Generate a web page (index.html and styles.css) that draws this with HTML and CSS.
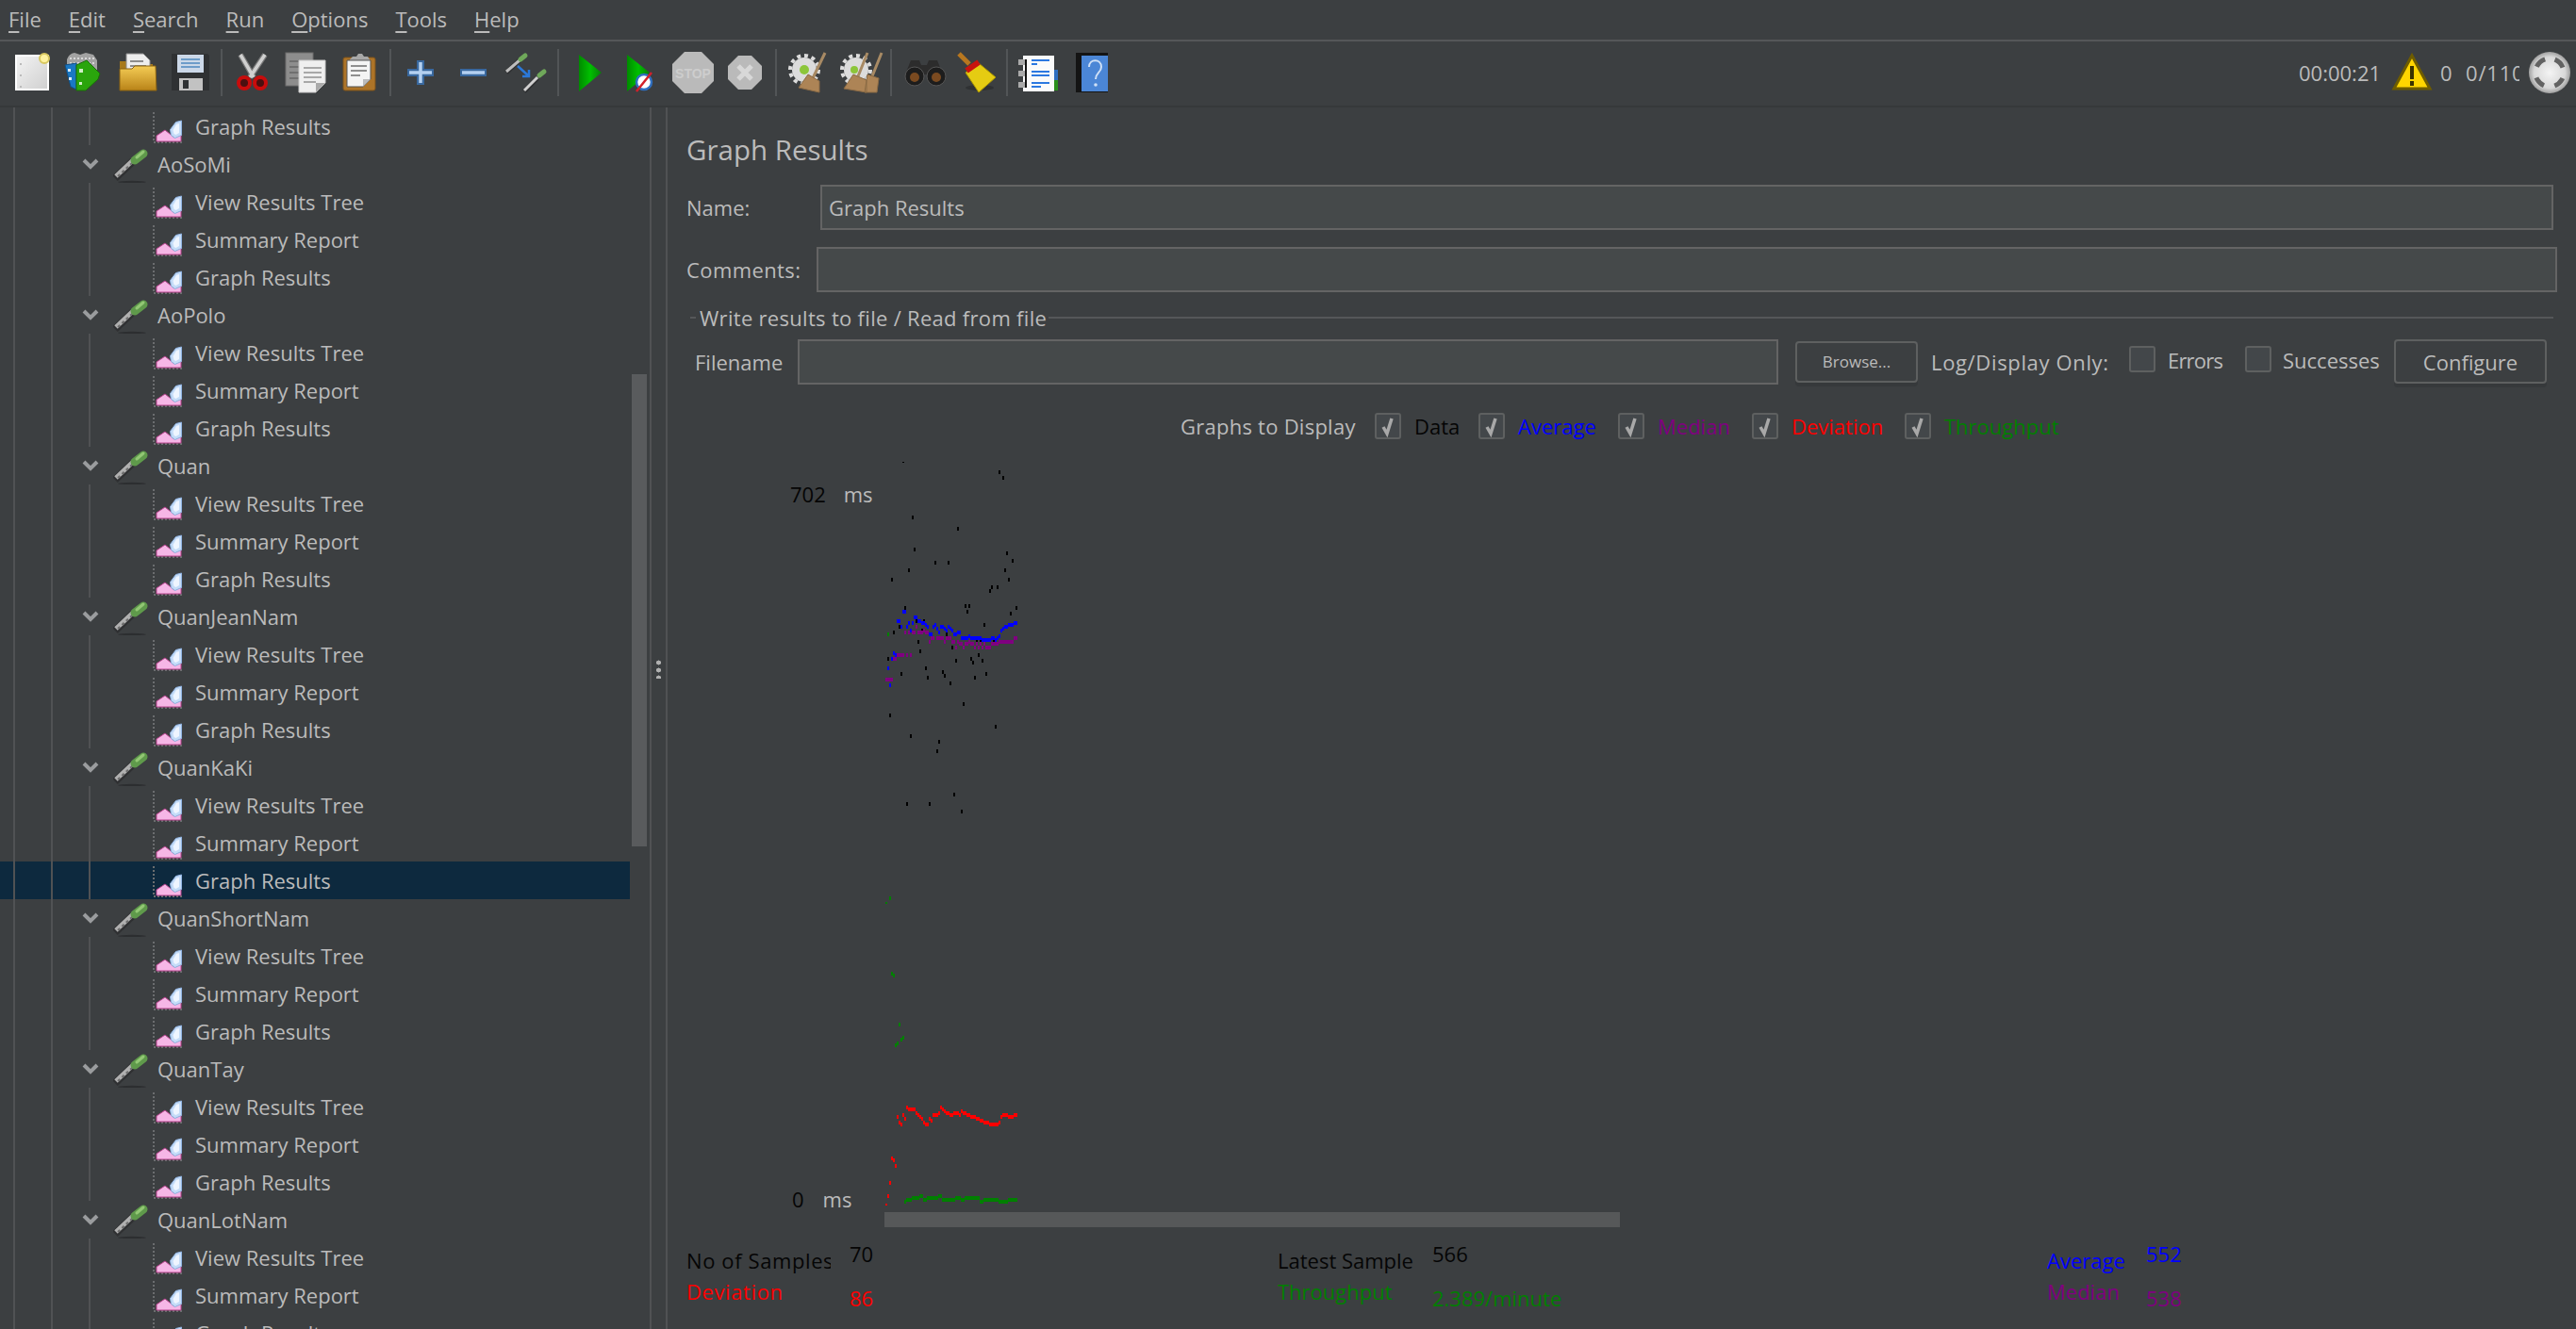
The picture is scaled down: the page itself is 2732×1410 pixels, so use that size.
FILE: index.html
```html
<!DOCTYPE html>
<html lang="en">
<head>
<meta charset="utf-8">
<title>Apache JMeter - Graph Results</title>
<link rel="stylesheet" href="styles.css">
</head>
<body>
<svg class="sprite" aria-hidden="true">
  <defs>
    <linearGradient id="g-paper" x1="0" y1="0" x2="1" y2="1"><stop offset="0" stop-color="#f4f4f4"/><stop offset="1" stop-color="#cfcfcf"/></linearGradient>
    <linearGradient id="g-folder" x1="0" y1="0" x2="0" y2="1"><stop offset="0" stop-color="#f4cc55"/><stop offset="1" stop-color="#b98318"/></linearGradient>
    <linearGradient id="g-play" x1="0" y1="0" x2="1" y2="0"><stop offset="0" stop-color="#008a00"/><stop offset=".5" stop-color="#00c000"/><stop offset="1" stop-color="#0a7a0a"/></linearGradient>
    <radialGradient id="g-ball"><stop offset="0" stop-color="#f4f4f4"/><stop offset=".75" stop-color="#d8d8d8"/><stop offset="1" stop-color="#a0a0a0"/></radialGradient>
    <symbol id="i-graph" viewBox="0 0 34 34">
      <path class="axis" d="M1 1v32M1 33h32"/>
      <path fill="#f6b6e6" stroke="#b8448e" stroke-width="1" d="M4 32v-6l9-6 5 4 5 4 7-3v7z"/>
      <path fill="#c4dcf8" stroke="#8fb2e0" stroke-width="1" d="M30.500 10l-6 1.500-6 8 1 6 4 3 7-3z"/>
      <path fill="#eef5ff" d="M28 13l-3 1-3.500 6 1 4 2 1 3.500-2z"/>
    </symbol>
    <symbol id="i-pipette" viewBox="0 0 38 38">
      <ellipse cx="20" cy="37" rx="15" ry="1.200" fill="#2c2e30"/>
      <path stroke="#2f3032" stroke-width="8" d="M2 33L21 15"/>
      <path stroke="#b0b0b0" stroke-width="5" d="M3 31L21 14"/>
      <path stroke="#6d6d6d" stroke-width="2" stroke-dasharray="3 3" d="M5 31L21 16"/>
      <path stroke="#5f9a4b" stroke-width="9" stroke-linecap="round" d="M23 14L32 7"/>
      <path stroke="#92c774" stroke-width="3" stroke-linecap="round" d="M25 11L32 5"/>
    </symbol>
    <symbol id="i-check" viewBox="0 0 24 24">
      <path fill="none" stroke="#a8a8a8" stroke-width="3.500" d="M7 13l4 7 5-16"/>
    </symbol>
  </defs>
</svg>

<div class="app">
  <nav class="menubar">
    <span><u>F</u>ile</span><span><u>E</u>dit</span><span><u>S</u>earch</span><span><u>R</u>un</span><span><u>O</u>ptions</span><span><u>T</u>ools</span><span><u>H</u>elp</span>
  </nav>

  <header class="toolbar">
    <div class="tb-group">
      <button class="tb-btn" aria-label="New"><svg viewBox="0 0 44 44"><rect x="5" y="4" width="34" height="36" fill="url(#g-paper)" stroke="#fff" stroke-width="2"/><circle cx="35" cy="7" r="5" fill="#fff3a0" stroke="#d8c860" stroke-width="2"/><path stroke="#bbb" stroke-width="2" stroke-dasharray="2 10" d="M10 12v26"/></svg></button>
      <button class="tb-btn" aria-label="Templates"><svg viewBox="0 0 44 44"><path fill="#a2a2a2" d="M3 8q2-6 8-7l6 2 6-2 8 2 4 6v12H3z"/><path stroke="#d8d8d8" stroke-width="2" stroke-dasharray="2 2" d="M6 7h26M6 12h26"/><path fill="#1a78c4" stroke="#0f4f86" d="M1 14l12-2v28l-6-3z"/><path fill="#d7e9f7" d="M4 18h3v3H4zM5 27h3v3H5z"/><path fill="#2aa50c" stroke="#1a6e08" d="M13 14l11-5 14 14-2 6-13 12H13z"/><path fill="#cfeec6" d="M16 18h4v4h-4zM16 32h3v3h-3z"/></svg></button>
      <button class="tb-btn" aria-label="Open"><svg viewBox="0 0 44 44"><path fill="#a87a1c" d="M3 10h14l3 3h18v10H3z"/><path fill="#ededed" stroke="#8c8c8c" d="M10 2h18l7 7v17H10z"/><path stroke="#8c8c8c" stroke-width="2" d="M14 10h14M14 15h17M14 20h17"/><path fill="url(#g-folder)" stroke="#8a6212" d="M3 18h13l3-3h22l1 26H3z"/></svg></button>
      <button class="tb-btn" aria-label="Save"><svg viewBox="0 0 44 44"><path fill="#2f3133" d="M2 2h38l2 2v37H2z"/><rect x="8" y="3" width="28" height="19" fill="#ccd8e8"/><path stroke="#6d9cc9" stroke-width="2" d="M12 8h20M12 12h20M12 16h20"/><rect x="10" y="28" width="25" height="13" fill="#c2c2c2"/><rect x="14" y="30" width="6" height="9" fill="#2f3133"/></svg></button>
    </div>
    <span class="tb-sep"></span>
    <div class="tb-group">
      <button class="tb-btn" aria-label="Cut"><svg viewBox="0 0 44 44"><path stroke="#7a7a7a" stroke-width="6" d="M8 3l14 24M34 3L18 27"/><path stroke="#d0d0d0" stroke-width="3.500" d="M8 3l14 24M34 3L18 27"/><circle cx="12" cy="33" r="6" fill="#4a1010" stroke="#c80c0c" stroke-width="4"/><circle cx="29" cy="33" r="6" fill="#4a1010" stroke="#c80c0c" stroke-width="4"/></svg></button>
      <button class="tb-btn" aria-label="Copy"><svg viewBox="0 0 44 44"><rect y="1" width="29" height="35" fill="#8d8d8d" stroke="#6e6e6e"/><path stroke="#6f6f6f" stroke-width="2" d="M4 10h10M4 16h10M4 22h10M4 28h10"/><path fill="#efefef" stroke="#c8c8c8" d="M14 9h28v24l-10 10H14z"/><path fill="#aaa" d="M32 43V33h10z"/><path stroke="#a8a8a8" stroke-width="2" d="M19 17h19M19 22h19M19 27h19M19 32h13"/></svg></button>
      <button class="tb-btn" aria-label="Paste"><svg viewBox="0 0 44 44"><rect x="5" y="6" width="34" height="35" rx="2" fill="#ad7428" stroke="#7c521a"/><path fill="#a8a8a8" d="M12 8l3-3h4l2-3h4l2 3h4l2 3v3H12z"/><path fill="#f4f4f4" stroke="#555" d="M9 9h25v20l-8 8H9z"/><path fill="#bbb" d="M26 37v-8h8z"/><path stroke="#8f8f8f" stroke-width="2" d="M13 15h17M13 20h17M13 25h10"/></svg></button>
    </div>
    <span class="tb-sep"></span>
    <div class="tb-group">
      <button class="tb-btn" aria-label="Expand"><svg viewBox="0 0 44 44"><path stroke="#39689e" stroke-width="8" d="M21 9v26M7 22h28"/><path stroke="#b4d0f0" stroke-width="3.500" d="M21 11v22M9 22h24"/></svg></button>
      <button class="tb-btn" aria-label="Collapse"><svg viewBox="0 0 44 44"><path stroke="#39689e" stroke-width="8" d="M7 22h28"/><path stroke="#b4d0f0" stroke-width="3.500" d="M9 22h24"/></svg></button>
      <button class="tb-btn" aria-label="Toggle"><svg viewBox="0 0 44 44"><path stroke="#2f3032" stroke-width="5" d="M0 22L14 9"/><path stroke="#bdbdbd" stroke-width="3" d="M0 21L14 9"/><path stroke="#6fa85a" stroke-width="5" stroke-linecap="round" d="M15 8l5-4"/><path stroke="#2f3032" stroke-width="5" d="M19 42L33 28"/><path stroke="#d0d0d0" stroke-width="3" d="M19 41L33 27"/><path stroke="#6fa85a" stroke-width="5" stroke-linecap="round" d="M35 25l5-4"/><path fill="none" stroke="#2b78d8" stroke-width="2.500" d="M12 15l11 10M24 19v7h-7"/></svg></button>
    </div>
    <span class="tb-sep"></span>
    <div class="tb-group tb-group-run">
      <button class="tb-btn" aria-label="Start"><svg viewBox="0 0 44 44"><path fill="url(#g-play)" d="M11 3l24 19-24 20z"/></svg></button>
      <button class="tb-btn" aria-label="Start no pauses"><svg viewBox="0 0 44 44"><path fill="url(#g-play)" d="M7 3l24 19-24 20z"/><circle cx="25" cy="32" r="8" fill="#fff" stroke="#2f6fc0" stroke-width="2.500"/><path stroke="#d2202a" stroke-width="2.500" d="M17 42l16-20"/></svg></button>
      <button class="tb-btn" aria-label="Stop"><svg viewBox="0 0 44 44"><path fill="#bababa" d="M13 0h18l13 13v18L31 44H13L0 31V13z"/><text class="stop-text" x="22" y="28">STOP</text></svg></button>
      <button class="tb-btn" aria-label="Shutdown"><svg viewBox="0 0 44 44"><path fill="#bababa" d="M15 4h14l11 11v14L29 40H15L4 29V15z"/><path stroke="#d8d8d8" stroke-width="5" d="M15 15l14 14M29 15L15 29"/></svg></button>
    </div>
    <span class="tb-sep"></span>
    <div class="tb-group">
      <button class="tb-btn" aria-label="Clear"><svg viewBox="0 0 44 44"><circle cx="19" cy="19" r="13" fill="#dcdcdc"/><circle cx="19" cy="19" r="15" fill="none" stroke="#dcdcdc" stroke-width="4" stroke-dasharray="4 3.800"/><circle cx="19" cy="19" r="5" fill="#8cc63a"/><path stroke="#a88a64" stroke-width="3" d="M41 1L28 28"/><path fill="#ad8456" stroke="#8a6a44" d="M23 24l12 7v12l-22-5z"/></svg></button>
      <button class="tb-btn" aria-label="Clear all"><svg viewBox="0 0 44 44"><circle cx="18" cy="19" r="13" fill="#dcdcdc"/><circle cx="18" cy="19" r="15" fill="none" stroke="#dcdcdc" stroke-width="4" stroke-dasharray="4 3.800"/><circle cx="16" cy="19" r="4" fill="#8cc63a"/><path stroke="#a88a64" stroke-width="3" d="M30 1L20 26M45 1L35 26"/><path fill="#ad8456" stroke="#8a6a44" d="M15 24l14 6v13l-24-4zM30 24l12 4-2 15H27z"/></svg></button>
    </div>
    <span class="tb-sep"></span>
    <div class="tb-group">
      <button class="tb-btn" aria-label="Search"><svg viewBox="0 0 44 44"><path fill="#2c2c2c" d="M9 9h9l2 5h6l2-5h9l6 15H3z"/><circle cx="13" cy="26" r="10" fill="#1d1d1d" stroke="#555" stroke-width="1"/><circle cx="36" cy="26" r="10" fill="#1d1d1d" stroke="#555" stroke-width="1"/><circle cx="13" cy="27" r="5" fill="#7a4a20"/><circle cx="36" cy="27" r="5" fill="#7a4a20"/></svg></button>
      <button class="tb-btn" aria-label="Reset search"><svg viewBox="0 0 44 44"><ellipse cx="26" cy="38" rx="15" ry="3" fill="#2f3133"/><path stroke="#b8771f" stroke-width="5" d="M4 2l11 11"/><path fill="#e5cc12" stroke="#a89400" d="M11 22l14-10 18 15-18 16z"/><path stroke="#c8130f" stroke-width="6" d="M12 20l13-9"/></svg></button>
    </div>
    <span class="tb-sep"></span>
    <div class="tb-group">
      <button class="tb-btn" aria-label="Log viewer"><svg viewBox="0 0 44 44"><rect x="38" y="19" width="5" height="11" fill="#2f6fc0"/><rect x="38" y="30" width="5" height="11" fill="#2a8f1a"/><rect x="6" y="4" width="33" height="38" fill="#fafafa"/><rect x="1" y="8" width="9" height="6" fill="#aaa"/><rect x="1" y="20" width="9" height="6" fill="#aaa"/><rect x="1" y="32" width="9" height="6" fill="#aaa"/><path stroke="#111" stroke-width="2" d="M9 8v30"/><path stroke="#2b78e0" stroke-width="2" d="M15 9h19M15 13h6M15 21h19M15 25h19M15 33h19M15 37h10"/></svg></button>
      <button class="tb-btn" aria-label="Help"><svg viewBox="0 0 44 44"><rect x="6" y="1" width="34" height="42" fill="#141414"/><rect x="12" y="4" width="28" height="38" fill="#4b86d6"/><path fill="none" stroke="#cfe0f6" stroke-width="2" d="M20 16c0-9 13-9 13 0 0 6-6 6-6 13"/><circle cx="27" cy="35" r="1.800" fill="#cfe0f6"/></svg></button>
    </div>
    <div class="status">
      <span class="timer">00:00:21</span>
      <svg class="warn" viewBox="0 0 42 40"><path fill="#ffd500" stroke="#6e5c00" stroke-width="3" d="M21 2L40 37H2z"/><path stroke="#3a3200" stroke-width="4" d="M21 13v14M21 29v5"/></svg>
      <span class="err-count">0</span>
      <span class="threads">0/110</span>
      <svg class="ball" viewBox="0 0 44 44"><circle cx="22" cy="22" r="22" fill="url(#g-ball)"/><path fill="none" stroke="#626262" stroke-width="5" stroke-dasharray="12 11.560" stroke-dashoffset="-5.780" d="M22 7a15 15 0 1 1-.01 0z"/></svg>
    </div>
  </header>

  <main class="workspace">
    <aside class="tree-pane">
      <ul class="tree">
        <li class="row child"><svg class="ico-graph"><use href="#i-graph"/></svg>Graph Results</li>
        <li class="row group"><svg class="chev" viewBox="0 0 18 12"><path d="M2 2l7 7 7-7"/></svg><svg class="ico-pip"><use href="#i-pipette"/></svg>AoSoMi</li>
        <li class="row child"><svg class="ico-graph"><use href="#i-graph"/></svg>View Results Tree</li>
        <li class="row child"><svg class="ico-graph"><use href="#i-graph"/></svg>Summary Report</li>
        <li class="row child"><svg class="ico-graph"><use href="#i-graph"/></svg>Graph Results</li>
        <li class="row group"><svg class="chev" viewBox="0 0 18 12"><path d="M2 2l7 7 7-7"/></svg><svg class="ico-pip"><use href="#i-pipette"/></svg>AoPolo</li>
        <li class="row child"><svg class="ico-graph"><use href="#i-graph"/></svg>View Results Tree</li>
        <li class="row child"><svg class="ico-graph"><use href="#i-graph"/></svg>Summary Report</li>
        <li class="row child"><svg class="ico-graph"><use href="#i-graph"/></svg>Graph Results</li>
        <li class="row group"><svg class="chev" viewBox="0 0 18 12"><path d="M2 2l7 7 7-7"/></svg><svg class="ico-pip"><use href="#i-pipette"/></svg>Quan</li>
        <li class="row child"><svg class="ico-graph"><use href="#i-graph"/></svg>View Results Tree</li>
        <li class="row child"><svg class="ico-graph"><use href="#i-graph"/></svg>Summary Report</li>
        <li class="row child"><svg class="ico-graph"><use href="#i-graph"/></svg>Graph Results</li>
        <li class="row group"><svg class="chev" viewBox="0 0 18 12"><path d="M2 2l7 7 7-7"/></svg><svg class="ico-pip"><use href="#i-pipette"/></svg>QuanJeanNam</li>
        <li class="row child"><svg class="ico-graph"><use href="#i-graph"/></svg>View Results Tree</li>
        <li class="row child"><svg class="ico-graph"><use href="#i-graph"/></svg>Summary Report</li>
        <li class="row child"><svg class="ico-graph"><use href="#i-graph"/></svg>Graph Results</li>
        <li class="row group"><svg class="chev" viewBox="0 0 18 12"><path d="M2 2l7 7 7-7"/></svg><svg class="ico-pip"><use href="#i-pipette"/></svg>QuanKaKi</li>
        <li class="row child"><svg class="ico-graph"><use href="#i-graph"/></svg>View Results Tree</li>
        <li class="row child"><svg class="ico-graph"><use href="#i-graph"/></svg>Summary Report</li>
        <li class="row child selected"><svg class="ico-graph"><use href="#i-graph"/></svg>Graph Results</li>
        <li class="row group"><svg class="chev" viewBox="0 0 18 12"><path d="M2 2l7 7 7-7"/></svg><svg class="ico-pip"><use href="#i-pipette"/></svg>QuanShortNam</li>
        <li class="row child"><svg class="ico-graph"><use href="#i-graph"/></svg>View Results Tree</li>
        <li class="row child"><svg class="ico-graph"><use href="#i-graph"/></svg>Summary Report</li>
        <li class="row child"><svg class="ico-graph"><use href="#i-graph"/></svg>Graph Results</li>
        <li class="row group"><svg class="chev" viewBox="0 0 18 12"><path d="M2 2l7 7 7-7"/></svg><svg class="ico-pip"><use href="#i-pipette"/></svg>QuanTay</li>
        <li class="row child"><svg class="ico-graph"><use href="#i-graph"/></svg>View Results Tree</li>
        <li class="row child"><svg class="ico-graph"><use href="#i-graph"/></svg>Summary Report</li>
        <li class="row child"><svg class="ico-graph"><use href="#i-graph"/></svg>Graph Results</li>
        <li class="row group"><svg class="chev" viewBox="0 0 18 12"><path d="M2 2l7 7 7-7"/></svg><svg class="ico-pip"><use href="#i-pipette"/></svg>QuanLotNam</li>
        <li class="row child"><svg class="ico-graph"><use href="#i-graph"/></svg>View Results Tree</li>
        <li class="row child"><svg class="ico-graph"><use href="#i-graph"/></svg>Summary Report</li>
        <li class="row child"><svg class="ico-graph"><use href="#i-graph"/></svg>Graph Results</li>
      </ul>
      <div class="tree-scroll"><div class="tree-thumb"></div></div>
    </aside>

    <div class="divider"><span class="grip"></span></div>

    <section class="panel">
      <h1 class="title">Graph Results</h1>
      <div class="form-row name-row"><label class="lbl-name">Name:</label><input class="field" type="text" value="Graph Results"></div>
      <div class="form-row comment-row"><label class="lbl-comment">Comments:</label><input class="field" type="text"></div>

      <div class="group-head"><span class="legend">Write results to file / Read from file</span></div>
      <div class="file-row">
        <label class="lbl-file">Filename</label>
        <input class="field file-field" type="text">
        <button class="btn btn-browse">Browse...</button>
        <span class="log-label">Log/Display Only:</span>
        <span class="box box-errors"></span><span class="txt-errors">Errors</span>
        <span class="box box-success"></span><span class="txt-success">Successes</span>
        <button class="btn btn-config">Configure</button>
      </div>

      <div class="display-row">
        <span class="display-label">Graphs to Display</span>
        <span class="opt opt-data"><span class="box"><svg><use href="#i-check"/></svg></span><span class="c-black">Data</span></span>
        <span class="opt opt-avg"><span class="box"><svg><use href="#i-check"/></svg></span><span class="c-blue">Average</span></span>
        <span class="opt opt-med"><span class="box"><svg><use href="#i-check"/></svg></span><span class="c-purple">Median</span></span>
        <span class="opt opt-dev"><span class="box"><svg><use href="#i-check"/></svg></span><span class="c-red">Deviation</span></span>
        <span class="opt"><span class="box"><svg><use href="#i-check"/></svg></span><span class="c-green">Throughput</span></span>
      </div>

      <div class="graph">
        <div class="axis-col">
          <div class="axis-top"><span class="c-black">702</span><span>ms</span></div>
          <div class="axis-bottom"><span class="c-black">0</span><span>ms</span></div>
        </div>
        <svg class="plot" viewBox="414 0 1014 2418">
          <g class="series" transform="translate(0 -6)">
            <path stroke="#000" d="M473 37v2M780 62v12M792 80v12M504 206v12M648 242v12M510 308v12M804 320v12M822 344v12M576 350v12M618 350v12M492 374v12M798 374v12M438 404v12M810 404v12M756 428v12M774 428v12M750 440v12M480 494v12M672 488v12M684 488v12M834 494v12M678 506v12M816 512v12M516 536v12M540 536v12M732 548v12M462 554v12M534 566v12M444 572v12M612 578v12M522 602v12M708 598v12M720 598v12M762 598v12M630 620v12M528 632v12M714 644v12M426 656v12M642 662v12M690 656v12M696 668v12M726 662v12M546 686v12M600 698v12M606 710v12M468 704v12M738 704v12M552 716v12M702 716v12M624 734v12M666 800v12M432 836v12M768 872v12M498 902v12M588 920v12M582 950v12M636 1088v12M486 1118v12M558 1118v12M660 1142v12"/>
            <path stroke="#800080" d="M420 722v12M426 722v12M432 722v12M438 722v12M444 656v12M450 656v12M456 644v12M462 644v12M468 644v12M474 644v12M486 644v12M498 644v12M480 572v12M492 572v12M504 572v12M510 572v12M516 554v12M522 572v12M528 572v12M534 572v12M540 566v12M546 572v12M552 572v12M558 602v12M564 590v12M570 590v12M582 590v12M588 590v12M594 590v12M600 590v12M606 602v12M612 590v12M618 590v12M624 590v12M630 602v12M636 602v12M642 620v12M648 602v12M654 608v12M660 608v12M666 620v12M672 608v12M678 608v12M684 602v12M690 608v12M696 608v12M702 620v12M708 608v12M714 620v12M720 608v12M726 620v12M732 608v12M738 620v12M744 620v12M750 620v12M756 608v12M762 608v12M768 608v12M774 608v12M780 602v12M786 602v12M792 602v12M798 602v12M804 602v12M810 602v12M816 602v12M822 602v12M828 590v12M834 590v12"/>
            <path stroke="#00f" d="M432 740v12M426 686v12M438 656v12M444 638v12M450 644v12M456 536v12M462 536v12M468 554v12M474 506v12M480 506v12M486 554v12M492 542v12M498 566v12M504 542v12M510 524v12M516 524v12M522 536v12M528 536v12M534 542v12M540 542v12M546 548v12M552 554v12M558 578v12M564 578v12M570 554v12M576 548v12M582 560v12M588 572v12M594 554v12M600 554v12M606 560v12M612 566v12M618 554v12M624 560v12M630 566v12M636 578v12M642 578v12M648 572v12M654 572v12M660 590v12M666 590v12M672 590v12M678 590v12M684 584v12M690 590v12M696 590v12M702 590v12M708 590v12M714 590v12M720 590v12M726 596v12M732 596v12M738 596v12M744 596v12M750 596v12M756 590v12M762 590v12M768 596v12M774 590v12M780 584v12M786 566v12M792 560v12M798 554v12M804 554v12M810 548v12M816 548v12M822 548v12M828 542v12M834 542v12"/>
            <path stroke="#007f00" d="M426 578v12"/>
          </g>
          <g class="series" transform="translate(0 1254)">
            <path stroke="#007f00" d="M432 158v12M420 176v8M438 398v12M444 404v12M462 560v12M474 602v12M468 608v12M456 620v12M450 626v12M480 1124v12M486 1118v12M492 1118v12M498 1118v12M504 1112v12M510 1112v12M516 1112v12M522 1112v12M528 1106v12M534 1106v12M540 1118v12M546 1118v12M552 1112v12M558 1112v12M564 1112v12M570 1112v12M576 1112v12M582 1112v12M588 1106v12M594 1106v12M600 1118v12M606 1118v12M612 1118v12M618 1118v12M624 1118v12M630 1118v12M636 1118v12M642 1112v12M648 1112v12M654 1112v12M660 1118v12M666 1118v12M672 1112v12M678 1112v12M684 1112v12M690 1112v12M696 1112v12M702 1112v12M708 1112v12M714 1112v12M720 1124v12M726 1124v12M732 1118v12M738 1118v12M744 1118v12M750 1118v12M756 1118v12M762 1118v12M768 1118v12M774 1118v12M780 1124v12M786 1124v12M792 1124v12M798 1124v12M804 1124v12M810 1118v12M816 1118v12M822 1118v12M828 1118v12M834 1118v12"/>
            <path stroke="#f00" d="M420 1136v8M426 1106v12M432 1064v12M438 986v12M444 992v12M450 1010v12M456 854v12M462 872v12M468 878v12M474 848v12M480 860v12M486 824v12M492 830v12M498 830v12M504 830v12M510 830v12M516 842v12M522 848v12M528 854v12M534 860v12M540 872v12M546 878v12M552 878v12M558 860v12M564 866v12M570 848v12M576 848v12M582 848v12M588 842v12M594 824v12M600 830v12M606 836v12M612 842v12M618 842v12M624 848v12M630 848v12M636 842v12M642 842v12M648 842v12M654 848v12M660 836v12M666 842v12M672 842v12M678 848v12M684 848v12M690 854v12M696 854v12M702 854v12M708 860v12M714 860v12M720 866v12M726 866v12M732 872v12M738 872v12M744 872v12M750 878v12M756 878v12M762 878v12M768 878v12M774 878v12M780 872v12M786 854v12M792 848v12M798 848v12M804 848v12M810 854v12M816 854v12M822 854v12M828 848v12M834 848v12"/>
          </g>
        </svg>
      </div>
      <div class="hscroll"></div>

      <div class="stats">
        <div class="stat stat-up stat-a"><span class="stat-label c-black">No of Samples</span><span class="c-black">70</span></div>
        <div class="stat stat-up stat-b"><span class="stat-label c-black">Latest Sample</span><span class="c-black">566</span></div>
        <div class="stat stat-up stat-c"><span class="stat-label c-blue">Average</span><span class="c-blue">552</span></div>
        <div class="stat stat-down stat-a"><span class="stat-label c-red">Deviation</span><span class="c-red">86</span></div>
        <div class="stat stat-down stat-b"><span class="stat-label c-green">Throughput</span><span class="c-green">2.389/minute</span></div>
        <div class="stat stat-down stat-c"><span class="stat-label c-purple">Median</span><span class="c-purple">538</span></div>
      </div>
    </section>
  </main>
</div>
</body>
</html>
```
FILE: styles.css
```css
* { box-sizing: border-box; }
html, body { margin: 0; height: 100%; overflow: hidden; }
body {
  background: #3c3f41;
  color: #bbbbbb;
  font-family: "Open Sans", "Noto Sans", sans-serif;
  font-size: 22px;
  line-height: 28px;
}
.sprite { width: 0; height: 0; position: absolute; }
svg { display: block; flex: none; overflow: visible; }
.app { display: flex; flex-direction: column; height: 1410px; }

/* menu */
.menubar {
  height: 44px;
  flex: none;
  display: flex;
  align-items: center;
  gap: 29px;
  padding: 0 0 2px 9px;
  border-bottom: 2px solid #555759;
}
.menubar u { text-underline-offset: 4px; text-decoration-thickness: 2px; }

/* toolbar */
.toolbar {
  height: 70px;
  flex: none;
  display: flex;
  align-items: center;
  padding: 0 6px 2px;
  border-bottom: 2px solid #36393a;
}
.tb-group { display: flex; }
.tb-btn {
  width: 56px;
  height: 50px;
  padding: 0;
  background: none;
  border: 0;
  display: flex;
  align-items: center;
  justify-content: center;
}
.tb-group-run .tb-btn { width: 55px; }
.tb-btn svg { width: 44px; height: 44px; fill: none; }
.tb-sep { width: 2px; height: 50px; margin: 0 4.25px; background: #525557; }
.stop-text { font: 700 14px "Liberation Sans", sans-serif; fill: #cdcdcd; text-anchor: middle; }

.status { margin-left: auto; display: flex; align-items: center; }
.timer { width: 99px; }
.warn { width: 42px; height: 40px; }
.err-count { margin-left: 9px; width: 27px; }
.threads { width: 57px; overflow: hidden; white-space: nowrap; letter-spacing: .8px; }
.ball { width: 44px; height: 44px; margin-left: 10px; }

/* tree */
.workspace { flex: 1; min-height: 0; display: flex; }
.tree-pane { width: 689px; flex: none; display: flex; overflow: hidden; }
.tree { list-style: none; margin: 0; padding: 0; width: 668px; flex: none; }
.row {
  height: 40px;
  display: flex;
  align-items: center;
  white-space: nowrap;
  background-repeat: no-repeat;
  background-image:
    linear-gradient(#505254, #505254),
    linear-gradient(#505254, #505254);
  background-size: 2px 100%, 2px 100%;
  background-position: 14px 0, 54px 0;
}
.row.child {
  padding-left: 162px;
  background-image:
    linear-gradient(#505254, #505254),
    linear-gradient(#505254, #505254),
    linear-gradient(#505254, #505254);
  background-size: 2px 100%, 2px 100%, 2px 100%;
  background-position: 14px 0, 54px 0, 94px 0;
}
.row.group { padding-left: 87px; }
.row.selected { background-color: #0d293e; }
.ico-graph { width: 34px; height: 34px; margin: 2px 11px 0 0; }
.axis { stroke: #6b6d6f; stroke-width: 2; stroke-dasharray: 2 2; fill: none; }
.chev { width: 18px; height: 12px; margin-right: 15px; }
.chev path { fill: none; stroke: #9a9c9e; stroke-width: 4; }
.ico-pip { width: 38px; height: 38px; margin: 2px 9px 0 0; }
.tree-scroll { width: 21px; flex: none; padding: 283px 3px 0 2px; }
.tree-thumb { width: 16px; height: 501px; background: #595b5d; }

/* divider */
.divider {
  width: 19px;
  flex: none;
  border-left: 2px solid #505254;
  border-right: 2px solid #505254;
  display: flex;
  align-items: center;
  justify-content: center;
  padding-bottom: 106px;
}
.grip {
  width: 5px;
  height: 21px;
  background: radial-gradient(circle, #b0b0b0 0 2.400px, transparent 2.600px) 0 0 / 5px 8px;
}

/* right panel */
.panel { flex: 1; min-width: 0; padding: 0 20px; }
.title { margin: 0; padding-top: 29px; font-size: 29.500px; font-weight: 400; line-height: 32px; height: 61px; color: #bbbbbb; }
.form-row { display: flex; align-items: center; height: 48px; }
.name-row { margin-top: 21px; padding-right: 4px; }
.comment-row { margin-top: 18px; }
.lbl-name { width: 142px; flex: none; }
.lbl-comment { width: 138px; flex: none; letter-spacing: .4px; }
.field {
  flex: 1;
  min-width: 0;
  height: 48px;
  padding: 0 7px;
  color: #bbbbbb;
  background: #45494a;
  border: 2px solid #646464;
  font: inherit;
  outline: 0;
}

.group-head { margin: 17px 4px 0 4px; height: 20px; display: flex; align-items: center; }
.group-head::before { content: ""; width: 6px; height: 2px; background: #555759; margin-right: 4px; }
.group-head::after { content: ""; flex: 1; height: 2px; background: #555759; margin-left: 2px; }
.legend { line-height: 20px; white-space: nowrap; letter-spacing: .3px; }

.file-row { margin-top: 13px; padding-left: 9px; height: 48px; display: flex; align-items: center; white-space: nowrap; }
.lbl-file { width: 109px; flex: none; }
.file-field { flex: none; width: 1040px; }
.btn {
  background: #3c3f41;
  color: #bbbbbb;
  border: 2px solid #5e6060;
  border-radius: 4px;
  box-shadow: 0 4px 0 #36393b;
  padding: 0;
  font: inherit;
}
.btn-browse { width: 130px; height: 44px; margin-left: 18px; font-size: 17px; }
.log-label { width: 189px; margin-left: 14px; flex: none; letter-spacing: .65px; }
.box {
  width: 28px;
  height: 28px;
  flex: none;
  display: block;
  padding: 1px;
  background: #43474a;
  border: 2px solid #5e6060;
  border-radius: 3px;
}
.box svg { width: 24px; height: 24px; transform: translate(-1px, -1px); }
.box-errors { margin: -6px 13px 0 21px; }
.txt-errors { width: 60px; margin-top: -4px; flex: none; letter-spacing: -.8px; }
.box-success { margin: -6px 12px 0 22px; }
.txt-success { width: 106px; margin-top: -4px; flex: none; }
.btn-config { width: 162px; height: 47px; margin-left: 12px; margin-top: -1px; }

.display-row { margin-top: 30px; height: 28px; padding-left: 524px; display: flex; align-items: center; white-space: nowrap; }
.display-label { width: 206px; flex: none; overflow: hidden; letter-spacing: .25px; }
.opt { display: flex; align-items: center; gap: 14px; flex: none; }
.opt-data { width: 110px; }
.opt-avg { width: 148px; }
.opt-med { width: 142px; }
.opt-dev { width: 162px; }
.c-black { color: #050505; }
.c-blue { color: #0000ff; }
.c-purple { color: #800080; }
.c-red { color: #ff0000; }
.c-green { color: #007f00; }

.graph { margin-top: 14px; height: 806px; display: flex; }
.axis-col { width: 210px; flex: none; display: flex; flex-direction: column; justify-content: space-between; padding-top: 30px; }
.axis-top { display: flex; gap: 19px; padding-left: 110px; }
.axis-bottom { display: flex; gap: 20px; padding-left: 112px; }
.plot { width: 338px; height: 806px; }
.series path { fill: none; stroke-width: 6; shape-rendering: crispEdges; }
.hscroll { margin-left: 210px; width: 780px; height: 16px; background: #565859; }

.stats { margin-top: 14px; display: grid; grid-template-columns: 627px 816px auto; row-gap: 5px; white-space: nowrap; }
.stat { display: flex; align-items: flex-start; }
.stat-up { height: 36px; }
.stat-up .stat-label { margin-top: 7px; }
.stat-down .stat-label { margin-top: -1px; }
.stat-down > :last-child { margin-top: 6px; }
.stat-label { flex: none; overflow: hidden; }
.stat-a .stat-label { width: 153px; margin-right: 20px; letter-spacing: .6px; }
.stat-b .stat-label { width: 164px; }
.stat-c .stat-label { width: 105px; }
```
